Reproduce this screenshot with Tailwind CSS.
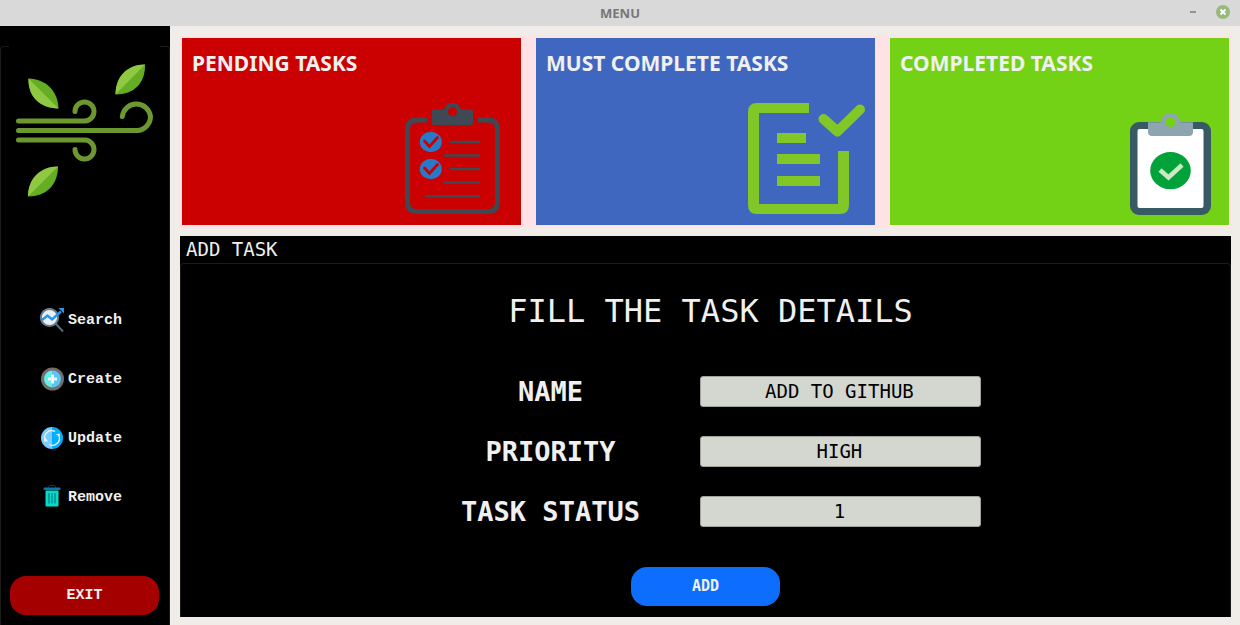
<!DOCTYPE html>
<html lang="en">
<head>
<meta charset="utf-8">
<meta name="viewport" content="width=device-width, initial-scale=1">
<title>MENU</title>
<script src="https://cdn.jsdelivr.net/npm/@tailwindcss/browser@4"></script>
</head>
<body class="flex min-h-screen flex-col bg-[#f0ece7] text-[#f0f0f0]">
<header class="grid h-[26px] grid-cols-[1fr_auto_1fr] items-center bg-[#d9d9d9] font-['Noto_Sans',sans-serif]">
  <h1 class="col-start-2 text-[13px] leading-5 font-bold text-[#777777]">MENU</h1>
  <div class="flex items-center justify-end gap-4 pr-[10px] pb-[2px]">
    <button type="button" aria-label="Minimize" class="flex h-3 w-[14px] items-center justify-center"><span class="h-[2px] w-[6px] bg-[#929292]"></span></button>
    <button type="button" aria-label="Close">
      <svg class="block" width="14" height="14" viewBox="0 0 14 14"><circle cx="7" cy="7" r="7" fill="#99b87c"/><path d="M4.500 4.500l5 5M9.500 4.500l-5 5" stroke="#fff" stroke-width="2"/></svg>
    </button>
  </div>
</header>
<div class="flex flex-1">
  <aside class="flex w-[170px] shrink-0 flex-col bg-black pt-5 font-['Liberation_Mono',monospace]">
    <div class="flex h-2 justify-between">
      <span class="w-[9px] rounded-tl-sm border-t border-l border-[#1b1b1b]"></span>
      <span class="w-[10px] rounded-tr-sm border-t border-r border-[#1b1b1b]"></span>
    </div>
    <div class="flex flex-1 flex-col border-x border-[#1b1b1b]">
      <svg class="ml-[9px] block" width="150" height="150" viewBox="10 54 150 150" role="img" aria-label="Wind and leaves">
        <g fill="none" stroke="#6d982f" stroke-width="5" stroke-linecap="round">
          <path d="M18.500 121H85A9.500 9.500 0 0 0 94 111.500A9.500 9.500 0 0 0 75 111.500"/>
          <path d="M18.500 130.500H137A14.200 14.200 0 0 0 150.500 116.500A14.200 14.200 0 0 0 122.300 116.500"/>
          <path d="M18.500 140H85A9.500 9.500 0 0 1 94 149.500A9.500 9.500 0 0 1 75 149.500"/>
        </g>
        <g fill="#65ad22">
          <path d="M28.500 78.500C46 79 58 91 58.500 108.500C40 108 28 97 28.500 78.500Z"/>
          <path d="M145 64.500C145.500 83 134 94.500 115.500 94.500C115.500 77 127 64.500 145 64.500Z"/>
          <path d="M58 166.500C58 185 46 196.500 28 196.500C28 179 40 166.500 58 166.500Z"/>
        </g>
        <g fill="#8fc943">
          <path d="M28.500 78.500L58.500 108.500C40 108 28 97 28.500 78.500Z"/>
          <path d="M145 64.500L115.500 94.500C115.500 77 127 64.500 145 64.500Z"/>
          <path d="M58 166.500L28 196.500C28 179 40 166.500 58 166.500Z"/>
        </g>
      </svg>
      <nav class="mt-[104px] flex flex-col gap-[35px] pl-[39px] text-[15px] leading-6 font-bold">
        <button type="button" class="flex h-6 items-center gap-1">
          <svg width="24" height="24" viewBox="0 0 24 24"><path d="M15.500 15.500L23 23.500" stroke="#566f7c" stroke-width="2"/><circle cx="9.500" cy="9.500" r="8.600" fill="#eceff1" stroke="#657f8c" stroke-width="2"/><path d="M2 12l5.500-4.500 4.500 4L21 3.500" fill="none" stroke="#2196f3" stroke-width="2.400"/><path d="M18.500 0H24v5.500z" fill="#2196f3"/></svg>
          <span class="pt-[2px]">Search</span>
        </button>
        <button type="button" class="flex h-6 items-center gap-1">
          <svg width="24" height="24" viewBox="0 0 24 24"><circle cx="12.500" cy="12" r="11.500" fill="#756d6d"/><path d="M12.500 3.500a8.500 8.500 0 0 0 0 17z" fill="#5ef0e9"/><path d="M12.500 3.500a8.500 8.500 0 0 1 0 17z" fill="#55c8f9"/><path d="M12.500 7.500v9M8 12h9" stroke="#f2f2ee" stroke-width="3"/></svg>
          <span class="pt-[2px]">Create</span>
        </button>
        <button type="button" class="flex h-6 items-center gap-1">
          <svg width="24" height="24" viewBox="0 0 24 24"><path d="M12 1a11 11 0 0 0 0 22z" fill="#7acbff"/><path d="M12 1a11 11 0 0 1 0 22z" fill="#00b0ff"/><g fill="none" stroke="#e6f2fa" stroke-width="1.300"><path d="M15 5.500A7 7 0 0 0 5.500 15"/><path d="M9 18.500A7 7 0 0 0 18.500 9"/></g><path d="M3.500 15.500h5L5.500 12zM15.500 8.500l4.500 1.500-.5-2.500z" fill="#e6f2fa"/></svg>
          <span class="pt-[2px]">Update</span>
        </button>
        <button type="button" class="flex h-6 items-center gap-1">
          <svg width="24" height="24" viewBox="0 0 24 24"><path d="M8.500 3V1.500a1 1 0 0 1 1-1h5a1 1 0 0 1 1 1V3" fill="none" stroke="#12324f"/><rect x="3.500" y="2.500" width="17" height="2.500" rx="1" fill="#0878b4"/><path d="M5.500 5.500h13V20.500q0 1-1 1h-11q-1 0-1-1z" fill="#00ddcb"/><path d="M9 8v10.500M12 8v10.500M15 8v10.500" stroke="#087f86" stroke-width="1.300"/></svg>
          <span class="pt-[2px]">Remove</span>
        </button>
      </nav>
      <button type="button" class="mt-auto mr-[10px] mb-[10px] ml-[9px] h-[39px] rounded-2xl bg-[#a50000] pt-[2px] text-[15px] font-bold">EXIT</button>
    </div>
  </aside>
  <main class="flex min-w-0 flex-1 flex-col gap-[9px] pt-[10px] pr-[9px] pb-2 pl-[10px]">
    <section class="grid grid-cols-3 gap-[15px] bg-[#ffe2e6] p-[2px] font-['Noto_Sans',sans-serif]">
      <article class="flex h-[187px] flex-col justify-between bg-[#cb0000] pt-[10px] pl-[10px]">
        <h2 class="text-[21px] leading-[30px] font-bold">PENDING TASKS</h2>
        <svg class="mr-5 mb-[10px] self-end" width="97" height="113" viewBox="404 102 97 113" aria-hidden="true">
          <path d="M427 120h-10q-9.500 0-9.500 9.500v72.500q0 9.500 9.500 9.500h71q9.500 0 9.500-9.500v-72.500q0-9.500-9.500-9.500h-10" fill="none" stroke="#3e4953" stroke-width="4.800"/>
          <path fill-rule="evenodd" d="M434 109.500h10c1-4 4-6.500 8.500-6.500s7.500 2.500 8.500 6.500h10q2 0 2 2V123q0 2-2 2h-37q-2 0-2-2v-11.500q0-2 2-2zM452.500 107.500a4.500 4.300 0 1 0 .01 0z" fill="#3e4953"/>
          <g stroke="#3e4953" stroke-width="2.600" stroke-linecap="round"><path d="M451 142h28M445 155.500h34M451 169h28M445 182.500h34M426 196.200h53"/></g>
          <g fill="#2879c8"><ellipse cx="430.800" cy="142" rx="11" ry="10.200"/><ellipse cx="430.800" cy="169" rx="11" ry="10.200"/></g>
          <path d="M424.500 141l5 5.500 8-9M424.500 168l5 5.500 8-9" fill="none" stroke="#cb0000" stroke-width="2.800" stroke-linecap="round"/>
        </svg>
      </article>
      <article class="flex h-[187px] flex-col justify-between bg-[#4067c0] pt-[10px] pl-[10px]">
        <h2 class="text-[21px] leading-[30px] font-bold">MUST COMPLETE TASKS</h2>
        <svg class="mr-[9px] mb-[10px] self-end" width="119" height="113" viewBox="747 102 119 113" aria-hidden="true">
          <path d="M809 103v10h-50v91h79v-53h11v54q0 9-9 9h-83q-9 0-9-9v-93q0-9 9-9z" fill="#81c728"/>
          <path d="M777 133h29v10h-29zM777 154h43v10h-43zM777 176h43v10h-43z" fill="#81c728"/>
          <path d="M823.500 119l14 12.500 22.500-22" fill="none" stroke="#81c728" stroke-width="10" stroke-linecap="round" stroke-linejoin="round"/>
        </svg>
      </article>
      <article class="flex h-[187px] flex-col justify-between bg-[#73d216] pt-[10px] pl-[10px]">
        <h2 class="text-[21px] leading-[30px] font-bold">COMPLETED TASKS</h2>
        <svg class="mr-[17px] mb-[9px] self-end" width="83" height="104" viewBox="1129 112 83 104" aria-hidden="true">
          <rect x="1130" y="122" width="81" height="93" rx="9" fill="#375a64"/>
          <rect x="1137.500" y="129" width="66" height="79" rx="2" fill="#fff"/>
          <path d="M1148 122.300h13c0-5.500 4-9.300 9.500-9.300s9.500 3.800 9.500 9.300h13V132q0 4-4 4h-37q-4 0-4-4z" fill="#8ca5ae"/>
          <ellipse cx="1170.500" cy="122.200" rx="5" ry="4.800" fill="#73d216"/>
          <ellipse cx="1170.500" cy="170.700" rx="20.300" ry="18.600" fill="#00a239"/>
          <path d="M1160 170l8.500 7.500 13.500-12.500" fill="none" stroke="#cde9c4" stroke-width="4.500"/>
        </svg>
      </article>
    </section>
    <section class="flex flex-1 flex-col bg-black font-['DejaVu_Sans_Mono',monospace]">
      <h2 class="h-[27px] pl-[6px] text-[19px] leading-[27px]">ADD TASK</h2>
      <form class="flex flex-1 flex-col items-center rounded-t-sm border-x border-t border-[#1b1b1b] pb-[11px]">
        <h3 class="mt-[27px] pl-[10px] text-[32px] leading-10">FILL THE TASK DETAILS</h3>
        <div class="mt-[45px] grid grid-cols-[auto_281px] items-center gap-x-[60px] gap-y-[29px] pl-[31px]">
          <label for="name" class="pt-px text-center text-[27px] leading-[30px] font-bold">NAME</label>
          <input id="name" type="text" value="ADD TO GITHUB" class="h-[31px] w-full rounded-[3px] border border-[#a0a29c] bg-[#d3d7cf] pr-[2px] pb-[2px] text-center text-[19px] text-black">
          <label for="priority" class="pt-px text-center text-[27px] leading-[30px] font-bold">PRIORITY</label>
          <input id="priority" type="text" value="HIGH" class="h-[31px] w-full rounded-[3px] border border-[#a0a29c] bg-[#d3d7cf] pr-[2px] pb-[2px] text-center text-[19px] text-black">
          <label for="status" class="pt-px text-center text-[27px] leading-[30px] font-bold">TASK STATUS</label>
          <input id="status" type="text" value="1" class="h-[31px] w-full rounded-[3px] border border-[#a0a29c] bg-[#d3d7cf] pr-[2px] pb-[2px] text-center text-[19px] text-black">
        </div>
        <button type="submit" class="mt-auto h-[39px] w-[149px] rounded-2xl bg-[#0d6efd] text-[15px] font-bold">ADD</button>
      </form>
    </section>
  </main>
</div>
</body>
</html>
